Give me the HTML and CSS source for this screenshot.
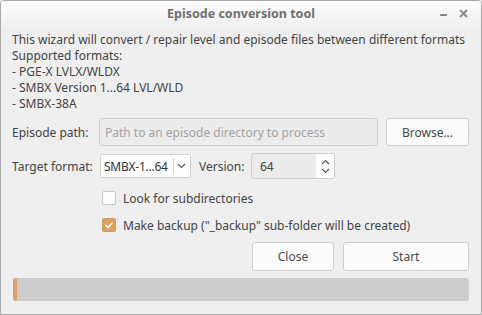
FILE: index.html
```html
<!DOCTYPE html>
<html>
<head>
<meta charset="utf-8">
<link rel="stylesheet" href="styles.css">
</head>
<body>
<div class="window">
  <div class="titlebar">
    <span class="title">Episode conversion tool</span>
    <div class="wbtns">
      <span class="wmin"></span>
      <svg class="wclose" width="9" height="9" viewBox="0 0 9 9"><path d="M1 1L8 8M8 1L1 8" stroke="#8a8a8a" stroke-width="2"/></svg>
    </div>
  </div>
  <div class="content">
    <div class="intro">
      <div>This wizard will convert / repair level and episode files between different formats</div>
      <div>Supported formats:</div>
      <div>- PGE-X LVLX/WLDX</div>
      <div>- SMBX Version 1...64 LVL/WLD</div>
      <div>- SMBX-38A</div>
    </div>
    <div class="row pathrow">
      <span class="label">Episode path:</span>
      <div class="input path">Path to an episode directory to process</div>
      <div class="btn browse">Browse...</div>
    </div>
    <div class="row fmtrow">
      <span class="label">Target format:</span>
      <div class="combo">
        <span class="combo-text">SMBX-1...64</span>
        <span class="combo-arrow"><svg width="9" height="6" viewBox="0 0 9 6"><path d="M1 1L4.5 4.5L8 1" fill="none" stroke="#555" stroke-width="1.2"/></svg></span>
      </div>
      <span class="label vlabel">Version:</span>
      <div class="spin">
        <span class="spin-text">64</span>
        <span class="spin-arrows">
          <svg width="9" height="6" viewBox="0 0 9 6"><path d="M1 5L4.5 1.5L8 5" fill="none" stroke="#555" stroke-width="1.1"/></svg>
          <svg width="9" height="6" viewBox="0 0 9 6"><path d="M1 1L4.5 4.5L8 1" fill="none" stroke="#555" stroke-width="1.1"/></svg>
        </span>
      </div>
    </div>
    <div class="check first">
      <span class="box"></span>
      <span class="ctext">Look for subdirectories</span>
    </div>
    <div class="check second">
      <span class="box on"><svg width="10" height="8" viewBox="0 0 10 8"><path d="M1.5 4L4 6.5L8.5 1.5" fill="none" stroke="#fff" stroke-width="1.6"/></svg></span>
      <span class="ctext">Make backup ("_backup" sub-folder will be created)</span>
    </div>
    <div class="buttons">
      <div class="btn close">Close</div>
      <div class="btn start">Start</div>
    </div>
    <div class="progress"><div class="chunk"></div></div>
  </div>
</div>
</body>
</html>
```
FILE: styles.css
```css
* { box-sizing: border-box; }
html, body { margin: 0; padding: 0; background: #efefef; }
body {
  font-family: "Noto Sans", "Open Sans", sans-serif;
  font-size: 12px;
  color: #4a4a4a;
}
.window {
  width: 482px;
  height: 315px;
  border: 1px solid #a9a9a9;
  border-radius: 4px 4px 0 0;
  background: #efefef;
  overflow: hidden;
}
.titlebar {
  height: 26px;
  background: linear-gradient(#fdfdfd, #f0f0f0);
  display: flex;
  align-items: center;
  justify-content: center;
  position: relative;
  padding-bottom: 1px;
}
.title {
  font-weight: bold;
  font-size: 12.5px;
  color: #707070;
}
.wbtns {
  position: absolute;
  right: 13px;
  top: 8px;
  display: flex;
  align-items: center;
  gap: 12px;
}
.wmin {
  width: 7px;
  height: 2px;
  background: #8a8a8a;
  margin-top: 3px;
}
.content {
  padding: 5px 12px 0 11px;
}
.intro {
  line-height: 16px;
  color: #444;
}
.row {
  display: flex;
  align-items: center;
}
.label { color: #444; white-space: nowrap; }
.pathrow {
  margin-top: 6px;
  height: 28px;
}
.pathrow .label { width: 87px; }
.input.path {
  width: 279px;
  height: 28px;
  border: 1px solid #cfcfcf;
  border-radius: 3px;
  background: #ececec;
  color: #a3a3a3;
  padding-left: 5px;
  display: flex;
  align-items: center;
}
.btn {
  background: #fcfcfc;
  border: 1px solid #cdcdcd;
  border-radius: 3px;
  display: flex;
  align-items: center;
  justify-content: center;
  color: #4a4a4a;
}
.browse {
  margin-left: 8px;
  width: 83px;
  height: 28px;
}
.fmtrow {
  margin-top: 7px;
  height: 26px;
}
.fmtrow .label:first-child { width: 88px; }
.combo {
  width: 91px;
  height: 24px;
  border: 1px solid #cfcfcf;
  border-radius: 2px;
  background: #fdfdfd;
  display: flex;
  align-items: center;
  padding: 0 1px 0 3px;
}
.combo-text {
  flex: 1;
  white-space: nowrap;
  overflow: hidden;
  color: #333;
  letter-spacing: -0.25px;
}
.combo-arrow {
  width: 16px;
  height: 16px;
  border-left: 1px solid #d5d5d5;
  display: flex;
  align-items: center;
  justify-content: center;
}
.vlabel { margin-left: 8px; width: 52px; }
.spin {
  width: 84px;
  height: 26px;
  border: 1px solid #cfcfcf;
  border-radius: 3px;
  background: #ececec;
  display: flex;
}
.spin-text {
  flex: 1;
  padding-left: 8px;
  display: flex;
  align-items: center;
  color: #444;
}
.spin-arrows {
  width: 18px;
  background: #fdfdfd;
  border-radius: 0 3px 3px 0;
  display: flex;
  flex-direction: column;
  align-items: center;
  justify-content: space-around;
  padding: 3px 0;
}
.check {
  display: flex;
  align-items: center;
  margin-left: 90px;
  height: 14px;
}
.check.first { margin-top: 12px; }
.check.second { margin-top: 13px; }
.box {
  width: 14px;
  height: 14px;
  border: 1px solid #c8c8c8;
  border-radius: 2px;
  background: #fdfdfd;
  display: flex;
  align-items: center;
  justify-content: center;
}
.box.on {
  background: #dea15f;
  border-color: #d99a56;
}
.ctext { margin-left: 7px; color: #444; }
.buttons {
  display: flex;
  justify-content: flex-end;
  gap: 9px;
  margin-top: 10px;
}
.close { width: 82px; height: 29px; }
.start { width: 126px; height: 29px; }
.progress {
  margin-top: 7px;
  margin-left: 1px;
  height: 23px;
  background: #cdcdcd;
  border-radius: 3px;
  overflow: hidden;
}
.chunk {
  width: 4px;
  height: 100%;
  background: #e0a063;
  border-radius: 2px;
}
```
